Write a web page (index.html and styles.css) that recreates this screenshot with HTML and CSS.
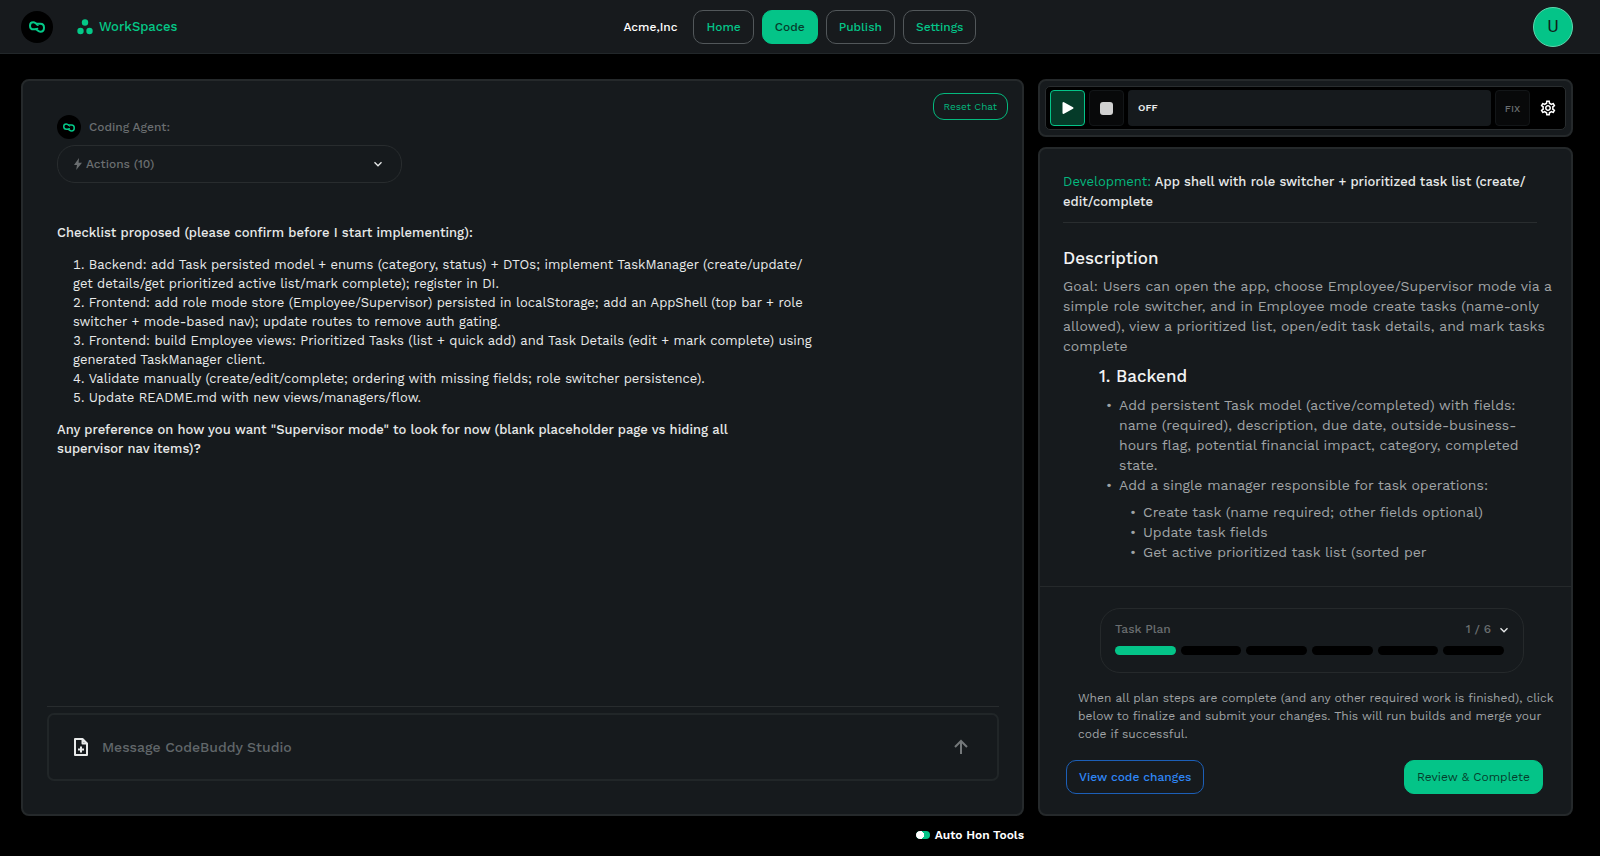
FILE: index.html
```html
<!DOCTYPE html>
<html lang="en">
<head>
  <meta charset="UTF-8">
  <meta name="viewport" content="width=device-width, initial-scale=1.0">
  <title>CodeBuddy Studio</title>
  <link rel="stylesheet" href="styles.css">
</head>
<body>
<!-- Logo, used in the header and next to the agent name -->
<svg class="sprite" aria-hidden="true">
    <symbol id="logo" viewBox="0 0 48 36">
        <path d="M20 25H14C7 25 3 20 3 14C3 8 7 4 13 4C19 4 21 9 27 8H34C41 8 45 13 45 20C45 27 41 32 34 32C27 32 26 26 20 25Z" fill="none" stroke="currentColor" stroke-width="6" stroke-linejoin="round"/>
        <path d="M20 24l6-2M22 10l5 3" stroke="currentColor" stroke-width="4" stroke-linecap="round"/>
    </symbol>
    <symbol id="chevron" viewBox="0 0 10 10">
        <path d="M1.5 3.2L5 6.8l3.5-3.6" fill="none" stroke="currentColor" stroke-width="1.3"/>
    </symbol>
</svg>

<!-- Header -->
<header>
    <div class="brand">
        <a href="#" class="logo" aria-label="CodeBuddy"><svg width="16" height="12"><use href="#logo"/></svg></a>
        <a href="#" class="workspaces">
            <svg width="16" height="16" viewBox="0 0 16 16" fill="currentColor"><circle cx="8" cy="3.5" r="3.2"/><circle cx="3.5" cy="12" r="3.2"/><circle cx="12.5" cy="12" r="3.2"/></svg>
            WorkSpaces
        </a>
    </div>
    <nav>
        <span class="company">Acme,Inc</span>
        <a href="#" class="nav-btn">Home</a>
        <a href="#" class="nav-btn active">Code</a>
        <a href="#" class="nav-btn">Publish</a>
        <a href="#" class="nav-btn">Settings</a>
    </nav>
    <button class="avatar" type="button">U</button>
</header>

<main>
    <!-- Chat -->
    <section class="panel chat">
        <div class="chat-top">
            <div class="messages">
                <div class="agent">
                    <span class="agent-logo"><svg width="12" height="9"><use href="#logo"/></svg></span>
                    Coding Agent:
                </div>
                <button class="actions" type="button">
                    <svg width="8" height="12" viewBox="0 0 8 12" fill="currentColor"><path d="M5 0L0 7h3l-.8 5L8 4.8H4.6z"/></svg>
                    Actions (10)
                    <svg class="chevron" width="10" height="10"><use href="#chevron"/></svg>
                </button>
                <div class="message">
                    <p>Checklist proposed (please confirm before I start implementing):</p>
                    <ol>
                        <li>Backend: add Task persisted model + enums (category, status) + DTOs; implement TaskManager (create/update/<wbr>get details/get prioritized active list/mark complete); register in DI.</li>
                        <li>Frontend: add role mode store (Employee/Supervisor) persisted in localStorage; add an AppShell (top bar + role switcher + mode-based nav); update routes to remove auth gating.</li>
                        <li>Frontend: build Employee views: Prioritized Tasks (list + quick add) and Task Details (edit + mark complete) using generated TaskManager client.</li>
                        <li>Validate manually (create/edit/complete; ordering with missing fields; role switcher persistence).</li>
                        <li>Update README.md with new views/managers/flow.</li>
                    </ol>
                    <p>Any preference on how you want "Supervisor mode" to look for now (blank placeholder page vs hiding all supervisor nav items)?</p>
                </div>
            </div>
            <button class="reset" type="button">Reset Chat</button>
        </div>
        <div class="composer">
            <form class="composer-box">
                <button class="icon-btn" type="button" aria-label="Attach file">
                    <svg width="16" height="20" viewBox="0 0 16 20" fill="none" stroke="currentColor" stroke-width="2" stroke-linejoin="round"><path d="M9.5 2H2v16h12V6.5zM9.5 2v4.5H14M8 9.5v6M5 12.5h6"/></svg>
                </button>
                <input type="text" aria-label="Message" placeholder="Message CodeBuddy Studio">
                <button class="icon-btn send" type="submit" aria-label="Send">
                    <svg width="16" height="16" viewBox="0 0 16 16" fill="none" stroke="currentColor" stroke-width="2"><path d="M8 15V2M2 8l6-6 6 6"/></svg>
                </button>
            </form>
        </div>
    </section>

    <div class="side">
        <!-- Run controls -->
        <section class="panel runner">
            <div class="runner-bar">
                <button class="run-btn play" type="button" aria-label="Run">
                    <svg width="12" height="14" viewBox="0 0 12 14" fill="currentColor" stroke="currentColor" stroke-width="2" stroke-linejoin="round"><path d="M1.5 2v10l9-5z"/></svg>
                </button>
                <button class="run-btn" type="button" aria-label="Stop">
                    <svg width="13" height="13" viewBox="0 0 13 13" fill="#d0d0d0"><rect width="13" height="13" rx="3"/></svg>
                </button>
                <div class="status">OFF</div>
                <button class="run-btn" type="button">FIX</button>
                <button class="icon-btn gear" type="button" aria-label="Run settings">
                    <svg width="18" height="18" viewBox="0 0 24 24" fill="currentColor"><path d="M19.43 12.98c.04-.32.07-.64.07-.98 0-.34-.03-.66-.07-.98l2.11-1.65c.19-.15.24-.42.12-.64l-2-3.46c-.09-.16-.26-.25-.44-.25-.06 0-.12.01-.17.03l-2.49 1c-.52-.4-1.08-.73-1.69-.98l-.38-2.65C14.46 2.18 14.25 2 14 2h-4c-.25 0-.46.18-.49.42l-.38 2.65c-.61.25-1.17.59-1.69.98l-2.49-1c-.06-.02-.12-.03-.18-.03-.17 0-.34.09-.43.25l-2 3.46c-.13.22-.07.49.12.64l2.11 1.65c-.04.32-.07.65-.07.98 0 .33.03.66.07.98l-2.11 1.65c-.19.15-.24.42-.12.64l2 3.46c.09.16.26.25.44.25.06 0 .12-.01.17-.03l2.49-1c.52.4 1.08.73 1.69.98l.38 2.65c.03.24.24.42.49.42h4c.25 0 .46-.18.49-.42l.38-2.65c.61-.25 1.17-.59 1.69-.98l2.49 1c.06.02.12.03.18.03.17 0 .34-.09.43-.25l2-3.46c.12-.22.07-.49-.12-.64l-2.11-1.65zm-1.98-1.71c.04.31.05.52.05.73 0 .21-.02.43-.05.73l-.14 1.13.89.7 1.08.84-.7 1.21-1.27-.51-1.04-.42-.9.68c-.43.32-.84.56-1.25.73l-1.06.43-.16 1.13-.2 1.35h-1.4l-.19-1.35-.16-1.13-1.06-.43c-.43-.18-.83-.41-1.23-.71l-.91-.7-1.06.43-1.27.51-.7-1.21 1.08-.84.89-.7-.14-1.13c-.03-.31-.05-.54-.05-.74s.02-.43.05-.73l.14-1.13-.89-.7-1.08-.84.7-1.21 1.27.51 1.04.42.9-.68c.43-.32.84-.56 1.25-.73l1.06-.43.16-1.13.2-1.35h1.39l.19 1.35.16 1.13 1.06.43c.43.18.83.41 1.23.71l.91.7 1.06-.43 1.27-.51.7 1.21-1.07.85-.89.7.14 1.13zM12 8c-2.21 0-4 1.79-4 4s1.79 4 4 4 4-1.79 4-4-1.79-4-4-4zm0 6c-1.1 0-2-.9-2-2s.9-2 2-2 2 .9 2 2-.9 2-2 2z"/></svg>
                </button>
            </div>
        </section>

        <!-- Current task -->
        <section class="panel task">
            <div class="task-body">
                <h2><span>Development:</span> App shell with role switcher + prioritized task list (create/<wbr>edit/complete</h2>
                <h3>Description</h3>
                <p>Goal: Users can open the app, choose Employee/Supervisor mode via a simple role switcher, and in Employee mode create tasks (name-only allowed), view a prioritized list, open/edit task details, and mark tasks complete</p>
                <div class="step">
                    <h3>1. Backend</h3>
                    <ul>
                        <li>Add persistent Task model (active/completed) with fields: name (required), description, due date, outside-business-hours flag, potential financial impact, category, completed state.</li>
                        <li>Add a single manager responsible for task operations:
                            <ul>
                                <li>Create task (name required; other fields optional)</li>
                                <li>Update task fields</li>
                                <li>Get active prioritized task list (sorted per</li>
                            </ul>
                        </li>
                    </ul>
                </div>
            </div>
            <div class="task-footer">
                <div class="plan">
                    <div class="plan-head">
                        <span>Task Plan</span>
                        <span class="count">1 / 6</span>
                        <svg class="chevron" width="10" height="10"><use href="#chevron"/></svg>
                    </div>
                    <div class="plan-bars">
                        <i class="done"></i><i></i><i></i><i></i><i></i><i></i>
                    </div>
                </div>
                <p>When all plan steps are complete (and any other required work is finished), click below to finalize and submit your changes. This will run builds and merge your code if successful.</p>
                <div class="task-buttons">
                    <button class="btn view" type="button">View code changes</button>
                    <button class="btn review" type="button">Review &amp; Complete</button>
                </div>
            </div>
        </section>
    </div>

    <label class="auto-tools"><input type="checkbox" checked> Auto Hon Tools</label>
</main>
</body>
</html>
```
FILE: styles.css
```css
/* General Styles */
* {
    box-sizing: border-box;
}

body {
    margin: 0;
    min-height: 100vh;
    display: flex;
    flex-direction: column;
    background: #000;
    color: #e8eaea;
    font-family: "Work Sans", "Inter", sans-serif;
    font-size: 13px;
    line-height: 19px;
}

button, input {
    font: inherit;
    color: inherit;
}

button {
    padding: 0;
    cursor: pointer;
}

a {
    text-decoration: none;
}

svg {
    display: block;
    flex-shrink: 0;
}

h2, h3, p, ul, ol {
    margin: 0;
    padding: 0;
}

.sprite {
    position: absolute;
    width: 0;
    height: 0;
}

/* Header */
header {
    display: grid;
    grid-template-columns: 1fr auto 1fr;
    align-items: center;
    height: 54px;
    padding: 0 21px;
    background: #171a1d;
    border-bottom: 1px solid #22272a;
}

.brand, .workspaces, nav {
    display: flex;
    align-items: center;
}

.brand {
    gap: 24px;
}

.logo, .agent-logo {
    display: flex;
    align-items: center;
    justify-content: center;
    width: 32px;
    height: 32px;
    border-radius: 50%;
    background: #000;
    color: #04c988;
}

.workspaces {
    gap: 6px;
    color: #04c988;
    font-weight: 500;
}

nav {
    gap: 8px;
    font-size: 12px;
    font-weight: 500;
    line-height: 18px;
}

.company {
    margin-right: 8px;
    color: #fff;
}

.nav-btn {
    padding: 7px 12px;
    border: 1px solid #52575a;
    border-radius: 10px;
    color: #04c488;
}

.nav-btn.active {
    background: #04c488;
    border-color: #04c488;
    color: #063d2c;
}

.avatar {
    justify-self: end;
    width: 40px;
    height: 40px;
    margin-right: 6px;
    border: 1px solid #5fd8ae;
    border-radius: 50%;
    background: #04c488;
    color: #10211b;
    font-family: "Roboto", sans-serif;
    font-size: 17px;
}

/* Layout */
main {
    flex: 1;
    display: grid;
    grid-template-columns: 15fr 8fr;
    grid-template-rows: 1fr auto;
    column-gap: 14px;
    padding: 25px 27px 0 21px;
}

.panel {
    background: #161a1d;
    border: 2px solid #25292b;
    border-radius: 8px;
}

/* Chat */
.chat {
    display: flex;
    flex-direction: column;
}

.chat-top {
    flex: 1;
    display: flex;
    align-items: flex-start;
    justify-content: space-between;
    padding: 12px 14px 0 34px;
}

.messages {
    padding-top: 22px;
}

.agent {
    display: flex;
    align-items: center;
    gap: 8px;
    color: #6a6e70;
    font-size: 12px;
    font-weight: 500;
}

.agent-logo {
    width: 24px;
    height: 24px;
}

.actions {
    display: flex;
    align-items: center;
    gap: 4px;
    width: 345px;
    height: 38px;
    margin-top: 6px;
    padding: 0 18px 0 16px;
    background: none;
    border: 1px solid #282c2e;
    border-radius: 18px;
    color: #6a6e70;
    font-size: 12px;
    font-weight: 500;
}

.chevron {
    margin-left: auto;
    color: #e8eaea;
}

.message {
    max-width: 762px;
    margin-top: 40px;
}

.message p {
    max-width: 720px;
    font-weight: 500;
}

.message ol {
    margin: 13px 0 13px 16px;
    list-style-position: inside;
}

.reset {
    height: 27px;
    padding: 0 10px;
    background: none;
    border: 1px solid #04b87d;
    border-radius: 11px;
    color: #04b87d;
    font-size: 10px;
}

.composer {
    margin: 0 23px 33px 24px;
    padding-top: 6px;
    border-top: 1px solid #282c2e;
}

.composer-box {
    display: flex;
    align-items: center;
    gap: 13px;
    height: 68px;
    padding: 0 28px 0 24px;
    border: 2px solid #212628;
    border-radius: 7px;
}

.composer-box input {
    flex: 1;
    padding: 0;
    background: none;
    border: 0;
    outline: 0;
    font-size: 14px;
    font-weight: 500;
}

.composer-box input::placeholder {
    color: #61676a;
    opacity: 1;
}

.icon-btn {
    background: none;
    border: 0;
}

.send {
    color: #74787a;
}

/* Run controls */
.side {
    display: flex;
    flex-direction: column;
    gap: 10px;
}

.runner {
    padding: 5px;
}

.runner-bar {
    display: flex;
    gap: 4px;
    padding: 3px 4px;
    background: #000;
    border: 1px solid #292d2f;
    border-radius: 5px;
}

.run-btn {
    display: flex;
    align-items: center;
    justify-content: center;
    width: 35px;
    height: 36px;
    background: #08090a;
    border: 1px solid #131618;
    border-radius: 4px;
    color: #6a6e70;
    font-size: 10px;
    font-weight: 500;
}

.play {
    background: #053b29;
    border-color: #04c488;
    color: #fff;
}

.status {
    flex: 1;
    padding: 0 10px;
    background: #161a1d;
    border-radius: 4px;
    font-size: 10px;
    font-weight: 600;
    line-height: 36px;
}

.gear {
    display: flex;
    align-items: center;
    justify-content: center;
    width: 27px;
    color: #fff;
}

/* Current task */
.task {
    flex: 1;
    display: flex;
    flex-direction: column;
    color: #a0a4a6;
}

.task-body {
    flex: 1;
    padding: 23px 14px 0 23px;
    font-size: 14px;
    line-height: 20px;
}

.task-body h2 {
    margin-right: 20px;
    padding-bottom: 10px;
    border-bottom: 1px solid #292d2f;
    color: #e8eaea;
    font-size: 13px;
    font-weight: 500;
}

.task-body h2 span {
    color: #04b87d;
    font-weight: 400;
}

.task-body h3 {
    color: #f2f3f3;
    font-size: 17px;
    font-weight: 500;
    line-height: 24px;
}

.task-body h2 + h3 {
    margin: 23px 0 6px;
}

.step {
    margin: 8px 20px 0 36px;
}

.step ul {
    margin-top: 7px;
    padding-left: 20px;
}

.step ul ul {
    padding-left: 24px;
}

.step li {
    list-style: none;
}

.step li::before {
    content: "•";
    float: left;
    margin-left: -13px;
}

.task-footer {
    padding: 21px 12px 20px 26px;
    border-top: 1px solid #25292b;
}

.plan {
    margin: 0 35px 0 34px;
    padding: 11px 14px 17px;
    border: 1px solid #25292b;
    border-radius: 20px;
    font-size: 12px;
    font-weight: 500;
}

.plan-head {
    display: flex;
    align-items: center;
    gap: 8px;
    color: #6a6e70;
}

.plan-head .count {
    margin-left: auto;
}

.plan-head .chevron {
    margin: 0;
}

.plan-bars {
    display: flex;
    gap: 5px;
    margin: 7px 5px 0 0;
}

.plan-bars i {
    flex: 1;
    height: 9px;
    border-radius: 5px;
    background: #000;
}

.plan-bars .done {
    background: #04c488;
}

.task-footer p {
    margin: 16px 0 17px;
    padding-left: 12px;
    font-size: 12px;
    line-height: 18px;
}

.task-buttons {
    display: flex;
    justify-content: space-between;
    margin-right: 16px;
}

.btn {
    height: 34px;
    padding: 0 12px;
    border: 1px solid #1c5fb8;
    border-radius: 10px;
    font-size: 12px;
    font-weight: 500;
}

.view {
    background: none;
    color: #2f86f6;
}

.review {
    background: #04c488;
    border-color: #04c488;
    color: #063d2c;
    font-weight: 400;
}

/* Auto tools toggle */
.auto-tools {
    display: flex;
    align-items: center;
    justify-content: flex-end;
    gap: 5px;
    height: 40px;
    padding-bottom: 2px;
    color: #fff;
    font-size: 12px;
    font-weight: 600;
}

.auto-tools input {
    appearance: none;
    width: 14px;
    height: 8px;
    margin: 0;
    border-radius: 4px;
    background: radial-gradient(circle at 4px 4px, #fff 4px, #04c488 4px);
}
```
